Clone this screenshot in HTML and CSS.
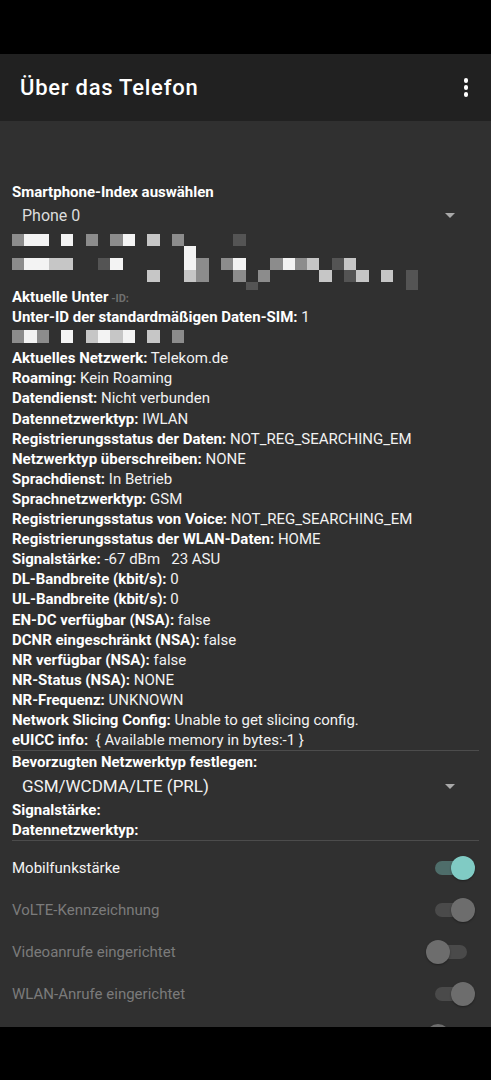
FILE: index.html
```html
<!DOCTYPE html>
<html lang="de">
<head>
<meta charset="utf-8">
<title>Über das Telefon</title>
<link rel="stylesheet" href="styles.css">
</head>
<body>
<div class="screen">
  <div class="statusbar"></div>
  <header class="appbar">
    <h1 class="title">Über das Telefon</h1>
    <div class="kebab"><span></span><span></span><span></span></div>
  </header>
  <main class="content">
    <div class="row"><b>Smartphone-Index auswählen</b></div>
    <div class="spinner">
      <span class="spin-text phone">Phone 0</span>
      <span class="arrow"></span>
    </div>
    <div class="mosaic m1">
      <div class="mrow"><i class="m"></i><i class="w"></i><i class="w"></i><i></i><i class="w"></i><i></i><i class="m"></i><i></i><i class="m"></i><i class="w"></i><i></i><i class="l"></i><i></i><i class="m"></i><i class="s4"></i><i class="d"></i></div>
      <div class="mrow"><i class="s14"></i><i class="w"></i></div>
      <div class="mrow"><i class="m"></i><i class="w"></i><i class="w"></i><i class="l"></i><i class="l"></i><i class="s2"></i><i class="d"></i><i class="w"></i><i class="s5"></i><i class="w"></i><i class="m"></i><i></i><i class="m"></i><i class="w"></i><i class="s2"></i><i class="m"></i><i class="w"></i><i class="m"></i><i class="l"></i><i></i><i class="d"></i><i class="l"></i></div>
      <div class="mrow"><i class="s11"></i><i class="l"></i><i class="s2"></i><i class="l"></i><i class="m"></i><i class="s2"></i><i class="m"></i><i></i><i class="m"></i><i class="s4"></i><i class="l"></i><i></i><i class="d"></i><i class="l"></i><i></i><i class="l"></i><i></i><i class="d"></i></div>
      <div class="mrow short"><i class="s19"></i><i class="d"></i><i class="s12"></i><i class="d"></i></div>
    </div>
    <div class="row"><b>Aktuelle Unter</b><span class="faint"> -ID:</span></div>
    <div class="row"><b>Unter-ID der standardmäßigen Daten-SIM:</b> 1</div>
    <div class="mosaic m2">
      <div class="mrow tall"><i class="m"></i><i class="w"></i><i class="m"></i><i></i><i class="w"></i><i></i><i class="l"></i><i class="w"></i><i class="l"></i><i class="w"></i><i></i><i class="l"></i><i></i><i class="m"></i></div>
    </div>
    <div class="row"><b>Aktuelles Netzwerk:</b> Telekom.de</div>
    <div class="row"><b>Roaming:</b> Kein Roaming</div>
    <div class="row"><b>Datendienst:</b> Nicht verbunden</div>
    <div class="row"><b>Datennetzwerktyp:</b> IWLAN</div>
    <div class="row"><b>Registrierungsstatus der Daten:</b> NOT_REG_SEARCHING_EM</div>
    <div class="row"><b>Netzwerktyp überschreiben:</b> NONE</div>
    <div class="row"><b>Sprachdienst:</b> In Betrieb</div>
    <div class="row"><b>Sprachnetzwerktyp:</b> GSM</div>
    <div class="row"><b>Registrierungsstatus von Voice:</b> NOT_REG_SEARCHING_EM</div>
    <div class="row"><b>Registrierungsstatus der WLAN-Daten:</b> HOME</div>
    <div class="row"><b>Signalstärke:</b> -67 dBm&nbsp;&nbsp; 23 ASU</div>
    <div class="row"><b>DL-Bandbreite (kbit/s):</b> 0</div>
    <div class="row"><b>UL-Bandbreite (kbit/s):</b> 0</div>
    <div class="row"><b>EN-DC verfügbar (NSA):</b> false</div>
    <div class="row"><b>DCNR eingeschränkt (NSA):</b> false</div>
    <div class="row"><b>NR verfügbar (NSA):</b> false</div>
    <div class="row"><b>NR-Status (NSA):</b> NONE</div>
    <div class="row"><b>NR-Frequenz:</b> UNKNOWN</div>
    <div class="row"><b>Network Slicing Config:</b> Unable to get slicing config.</div>
    <div class="row"><b>eUICC info:</b>&nbsp; { Available memory in bytes:-1 }</div>
    <div class="divider"></div>
    <div class="row"><b>Bevorzugten Netzwerktyp festlegen:</b></div>
    <div class="spinner big">
      <span class="spin-text">GSM/WCDMA/LTE (PRL)</span>
      <span class="arrow"></span>
    </div>
    <div class="row"><b>Signalstärke:</b></div>
    <div class="row"><b>Datennetzwerktyp:</b></div>
    <div class="divider"></div>
    <div class="toggles">
      <div class="toggle-row">
        <span class="toggle-label">Mobilfunkstärke</span>
        <span class="switch on"><span class="track"></span><span class="thumb"></span></span>
      </div>
      <div class="toggle-row disabled">
        <span class="toggle-label">VoLTE-Kennzeichnung</span>
        <span class="switch on"><span class="track"></span><span class="thumb"></span></span>
      </div>
      <div class="toggle-row disabled">
        <span class="toggle-label">Videoanrufe eingerichtet</span>
        <span class="switch"><span class="track"></span><span class="thumb"></span></span>
      </div>
      <div class="toggle-row disabled">
        <span class="toggle-label">WLAN-Anrufe eingerichtet</span>
        <span class="switch on"><span class="track"></span><span class="thumb"></span></span>
      </div>
      <div class="toggle-row disabled">
        <span class="toggle-label"></span>
        <span class="switch"><span class="track"></span><span class="thumb"></span></span>
      </div>
    </div>
  </main>
  <div class="navbar"></div>
</div>
</body>
</html>
```
FILE: styles.css
```css
* { box-sizing: border-box; }
html, body { margin: 0; padding: 0; background: #000; }
body { font-family: Roboto, "Noto Sans", "Liberation Sans", sans-serif; color: #fff; }

.screen { width: 491px; height: 1080px; display: flex; flex-direction: column; overflow: hidden; }
.statusbar { height: 54px; background: #000; flex: none; }
.appbar {
  height: 67px; flex: none; background: #212121;
  display: flex; align-items: center; justify-content: space-between;
  padding: 0 20px 0 20px;
}
.title { margin: 0; font-size: 22px; font-weight: 500; color: #fff; letter-spacing: 0.75px; }
.kebab { display: flex; flex-direction: column; gap: 2.5px; align-items: center; width: 8px; margin-right: 1px; }
.kebab span { width: 4.5px; height: 4.5px; border-radius: 50%; background: #fff; }

.content {
  height: 906px; flex: none; overflow: hidden; background: #303030;
  padding: 61px 12px 0 12px;
}
.row { font-size: 15px; line-height: 20.1px; height: 20.1px; white-space: nowrap; color: #f2f2f2; }
.row b { font-weight: 700; color: #fff; }
.faint { color: #6f6f6f; font-weight: 700; font-size: 11px; }

.spinner { height: 26px; display: flex; align-items: center; justify-content: space-between; padding: 0 24px 0 10px; }
.spin-text { font-size: 16px; color: #eee; }
.phone { color: #ddd; }
.arrow { width: 0; height: 0; border-left: 5.5px solid transparent; border-right: 5.5px solid transparent; border-top: 5.5px solid #a8a8a8; }
.spinner.big { height: 28px; }
.spinner.big .spin-text { font-size: 17px; color: #f2f2f2; }

.mosaic { display: flex; flex-direction: column; }
.m1 { padding-top: 6px; margin-bottom: -3px; }
.m2 { padding-top: 3px; height: 21px; }
.mrow { display: grid; grid-template-columns: repeat(40, 12.3px); grid-auto-rows: 12px; height: 12px; }
.mrow.tall { grid-auto-rows: 13px; height: 13px; }
.mrow i { display: block; }
.mrow .w { background: #f3f3f3; }
.mrow .l { background: #c6c6c6; }
.mrow .m { background: #8c8c8c; }
.mrow .d { background: #545454; }
.s2 { grid-column: span 2; }
.s4 { grid-column: span 4; }
.s5 { grid-column: span 5; }
.s11 { grid-column: span 11; }
.s12 { grid-column: span 12; }
.s14 { grid-column: span 14; }
.s19 { grid-column: span 19; }
.mrow.short { height: 8px; overflow: hidden; }

.divider { height: 1px; background: #4c4c4c; margin: 0 0 1px 0; }

.toggles { padding-top: 5px; }
.toggle-row { height: 42px; display: flex; align-items: center; justify-content: space-between; padding-right: 4px; }
.toggle-label { font-size: 15px; color: #f4f4f4; }
.disabled .toggle-label { color: #7b7b7b; }
.switch { position: relative; width: 49px; height: 24px; display: block; }
.track { position: absolute; left: 9px; top: 5px; width: 32px; height: 14px; border-radius: 7px; background: #4a4a4a; }
.thumb { position: absolute; left: 0; top: 0; width: 24px; height: 24px; border-radius: 50%; background: #6d6d6d; box-shadow: 0 1px 2px rgba(0,0,0,0.35); }
.switch.on .thumb { left: 25px; }
.toggle-row:not(.disabled) .switch.on .track { background: #4e6d6a; }
.toggle-row:not(.disabled) .switch.on .thumb { background: #80cbc4; }

.navbar { flex: 1; background: #000; }
```
